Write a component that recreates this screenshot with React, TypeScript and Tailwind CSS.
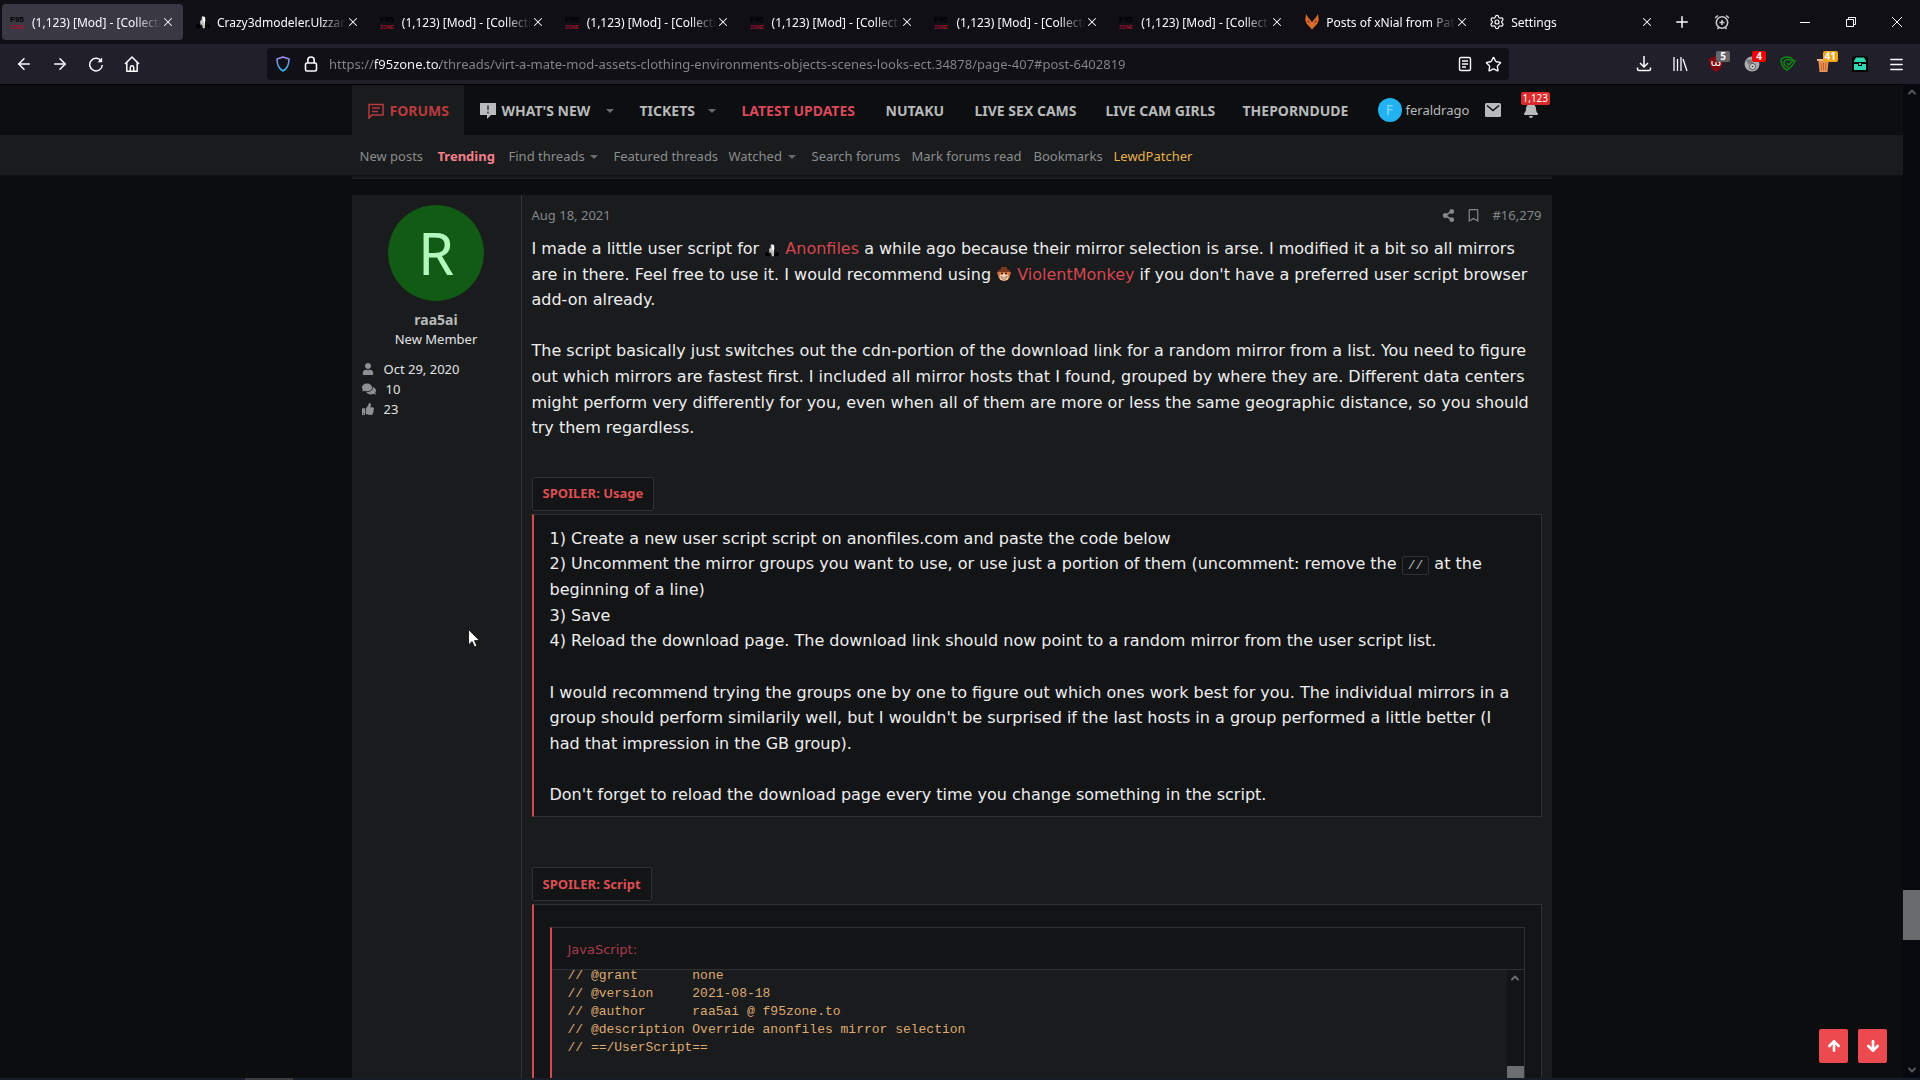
import type { ReactNode } from "react";
import { ArrowDown, ArrowLeft, ArrowRight, ArrowUp, ChevronDown, ChevronUp, Menu, Plus, Settings, Star, X } from "lucide-react";
import { FaBell, FaComments, FaRegBookmark, FaShareAlt, FaThumbsUp, FaUser } from "react-icons/fa";

const COLLECTION = "(1,123) [Mod] - [Collectio";

const tabs = [
  { icon: "f95", title: COLLECTION, active: true },
  { icon: "anon", title: "Crazy3dmodeler.Ulzzang" },
  { icon: "f95", title: COLLECTION },
  { icon: "f95", title: COLLECTION },
  { icon: "f95", title: COLLECTION },
  { icon: "f95", title: COLLECTION },
  { icon: "f95", title: COLLECTION },
  { icon: "fox", title: "Posts of xNial from Patreo" },
  { icon: "gear", title: "Settings" },
];

const navItems = [
  { label: "TICKETS", width: "w-[102px]", caret: true },
  { label: "LATEST UPDATES", width: "w-36", color: "text-[#d9485a]" },
  { label: "NUTAKU", width: "w-[89px]" },
  { label: "LIVE SEX CAMS", width: "w-[131px]" },
  { label: "LIVE CAM GIRLS", width: "w-[137px]" },
  { label: "THEPORNDUDE", width: "w-[135px]" },
];

const subItems = [
  { label: "New posts", width: "w-[78px]" },
  { label: "Trending", width: "w-[71px]", color: "font-bold text-[#f5808a]" },
  { label: "Find threads", width: "w-[105px]", caret: true },
  { label: "Featured threads", width: "w-[115px]" },
  { label: "Watched", width: "w-[83px]", caret: true },
  { label: "Search forums", width: "w-[100px]" },
  { label: "Mark forums read", width: "w-[122px]" },
  { label: "Bookmarks", width: "w-20" },
  { label: "LewdPatcher", width: "w-20", color: "text-[#e8b04e]" },
];

const code = [
  "// @grant       none",
  "// @version     2021-08-18",
  "// @author      raa5ai @ f95zone.to",
  "// @description Override anonfiles mirror selection",
  "// ==/UserScript==",
];

function AnonIcon() {
  return (
    <svg viewBox="0 0 16 16" className="inline-block size-4 shrink-0">
      <path d="M1 14c0-3 1-4 3-4l2 4zM15 14c0-3-1-4-3-4l-2 4z" fill="#000" />
      <path d="M7 2l3 1 .5 4-1 1 .5 6-2 .5-1-4-1.500.5-.5-4 1.500-1z" fill="#c4c4c4" />
      <path d="M8 3h2v10l-1-5-1-1z" fill="#fff" />
    </svg>
  );
}

function MonkeyIcon() {
  return (
    <svg viewBox="0 0 16 16" className="inline-block size-4 align-[-2px]">
      <circle cx="2.500" cy="7" r="1.500" fill="#c26a3c" />
      <circle cx="13.500" cy="7" r="1.500" fill="#c26a3c" />
      <circle cx="8" cy="9" r="6" fill="#d97b45" />
      <path d="M2 5c2-3 10-3 12 0l-1 1H3zM5 1h6v3H5z" fill="#7c3a1c" />
      <ellipse cx="8" cy="11" rx="4.500" ry="3.500" fill="#f7cfa8" />
      <path d="M5 10.500c2 2 4 2 6-.5 0 4-5 4.500-6 .5z" fill="#fff" stroke="#6b2f18" strokeWidth=".6" />
      <circle cx="6" cy="7.500" r="1" fill="#2a130a" />
      <circle cx="10" cy="7.500" r="1" fill="#2a130a" />
    </svg>
  );
}

function Favicon({ name }: { name: string }) {
  if (name === "anon") return <AnonIcon />;
  if (name === "gear") return <Settings className="size-4 shrink-0" strokeWidth={1.8} />;
  if (name === "fox") {
    return (
      <svg viewBox="0 0 16 16" className="size-4 shrink-0">
        <path d="M2 0l2.500 4L8 6l3.500-2L14 0l.8 6-1.300 3.500L8 15.500 2.500 9.500 1.200 6z" fill="#dc6a2c" />
        <path d="M5 4.500h6L8 8z" fill="#100f15" />
        <path d="M3 7l3 1.500M13 7l-3 1.500" stroke="#7d3310" fill="none" />
      </svg>
    );
  }
  return (
    <svg viewBox="0 0 16 16" className="size-4 shrink-0">
      <text x="0" y="8" fontSize="8" fontWeight="700" fontFamily="Liberation Sans, sans-serif" fill="#000">F95</text>
      <text x="0" y="15" fontSize="5" fontWeight="700" fontFamily="Liberation Sans, sans-serif" fill="#a5122f">ZONE</text>
    </svg>
  );
}

function ToolButton({ label, badge, badgeColor, children }: { label: string; badge?: string; badgeColor?: string; children: ReactNode }) {
  return (
    <button aria-label={label} className="relative flex h-10 w-9 items-center justify-center">
      {children}
      {badge && (
        <span className={`absolute top-[7px] right-1 h-[11px] min-w-[14px] rounded-xs px-0.5 text-center text-[10px] leading-[11px] font-bold ${badgeColor}`}>
          {badge}
        </span>
      )}
    </button>
  );
}

function Caret() {
  return <span className="border-x-4 border-t-4 border-x-transparent border-t-[#6b6c6e]" />;
}

function BrowserChrome() {
  return (
    <header className="text-[#fbfbfe]">
      {/* Tab strip */}
      <div className="flex h-11 bg-[#100f15]">
        <div className="flex min-w-0 flex-1">
          {tabs.map((tab, i) => (
            <div
              key={i}
              className={`mx-0.5 my-1 flex min-w-0 flex-1 items-center rounded px-2 ${tab.active ? "bg-[#3a3843]" : ""}`}
            >
              <Favicon name={tab.icon} />
              <a
                href="#tab"
                className="ml-1.5 min-w-0 flex-1 overflow-hidden pt-0.5 text-xs whitespace-nowrap [mask-image:linear-gradient(to_right,black_80%,transparent)]"
              >
                {tab.title}
              </a>
              <button aria-label="Close tab">
                <X className="size-3.5" strokeWidth={1.8} />
              </button>
            </div>
          ))}
        </div>
        <button aria-label="New tab" className="flex w-9 items-center justify-center">
          <Plus className="size-[18px]" strokeWidth={2} />
        </button>
        <button aria-label="Alarm" className="flex w-11 items-center justify-center text-[#c9c9cc]">
          <svg viewBox="0 0 16 16" className="size-4" fill="none" stroke="currentColor" strokeWidth="1.600">
            <circle cx="8" cy="8.500" r="5.700" />
            <path d="M8 6v5M5.500 8.500h5M1 4l3-2.500M15 4l-3-2.500M3.500 15l1.500-2M12.500 15L11 13" />
          </svg>
        </button>
        <div className="ml-[38px] flex">
          <button aria-label="Minimize" className="flex w-[46px] items-center justify-center">
            <span className="h-px w-2.5 bg-white" />
          </button>
          <button aria-label="Restore" className="flex w-[46px] items-center justify-center">
            <svg viewBox="0 0 10 10" className="size-2.5" fill="none" stroke="currentColor">
              <path d="M.5 2.500h7v7h-7zM2.500 2.500v-2h7v7h-2" />
            </svg>
          </button>
          <button aria-label="Close" className="flex w-[46px] items-center justify-center">
            <svg viewBox="0 0 10 10" className="size-2.5" fill="none" stroke="currentColor">
              <path d="M0 0l10 10M10 0L0 10" />
            </svg>
          </button>
        </div>
      </div>

      {/* Toolbar */}
      <div className="flex h-10 items-center gap-[117px] bg-[#211f29] px-1.5">
        <div className="flex">
          <ToolButton label="Back"><ArrowLeft className="size-[18px]" strokeWidth={2} /></ToolButton>
          <ToolButton label="Forward"><ArrowRight className="size-[18px]" strokeWidth={2} /></ToolButton>
          <ToolButton label="Reload">
            <svg viewBox="0 0 16 16" className="size-4" fill="none" stroke="currentColor" strokeWidth="1.500">
              <path d="M13.500 5.500A6.300 6.300 0 1 0 14.300 9" />
              <path d="M14.200 1.500v4.700H9.500z" fill="currentColor" stroke="none" />
            </svg>
          </ToolButton>
          <ToolButton label="Home">
            <svg viewBox="0 0 16 16" className="size-4" fill="none" stroke="currentColor" strokeWidth="1.500" strokeLinejoin="round">
              <path d="M1 8l7-7 7 7M2.800 6.500v8.700h10.400V6.500" />
              <path d="M6.300 15v-3.500a1.700 1.700 0 0 1 3.400 0V15" />
            </svg>
          </ToolButton>
        </div>
        <div className="flex h-8 flex-1 items-center rounded bg-[#121017] pr-0.5 pl-2">
          <svg viewBox="0 0 16 16" className="size-4" fill="none" strokeWidth="1.500" strokeLinejoin="round">
            <defs>
              <linearGradient id="shield" x1="0" y1="0" x2="0" y2="1">
                <stop offset="0" stopColor="#9a8cf0" />
                <stop offset="1" stopColor="#33b7e8" />
              </linearGradient>
            </defs>
            <path d="M8 1l6 2c0 6-1.500 9.500-6 12-4.500-2.500-6-6-6-12z" stroke="url(#shield)" />
          </svg>
          <svg viewBox="0 0 16 16" className="ml-3 size-4" fill="none" stroke="currentColor" strokeWidth="1.600">
            <rect x="2.500" y="7" width="11" height="8" rx="1.500" />
            <path d="M4.800 7V4.200a3.200 3.200 0 0 1 6.400 0V7" />
          </svg>
          <input
            aria-label="Address"
            className="ml-2.5 min-w-0 flex-1 bg-[linear-gradient(to_right,#86858c_46px,#fbfbfe_46px,#fbfbfe_111px,#86858c_111px)] bg-clip-text pt-0.5 text-[13px] text-transparent outline-none"
            defaultValue="https://f95zone.to/threads/virt-a-mate-mod-assets-clothing-environments-objects-scenes-looks-ect.34878/page-407#post-6402819"
          />
          <button aria-label="Reader view" className="flex w-7 justify-center">
            <svg viewBox="0 0 16 16" className="size-4" fill="none" stroke="currentColor" strokeWidth="1.400">
              <rect x="2.500" y="1.500" width="11" height="13" rx="1.500" />
              <path d="M5 5h6M5 8h6M5 11h4" />
            </svg>
          </button>
          <button aria-label="Bookmark this page" className="flex w-7 justify-center">
            <Star className="size-[17px]" strokeWidth={1.9} />
          </button>
        </div>
        <div className="flex">
          <ToolButton label="Downloads">
            <svg viewBox="0 0 16 16" className="size-4" fill="none" stroke="currentColor" strokeWidth="1.500">
              <path d="M8 0v11M4 7l4 4 4-4" />
              <path d="M1.500 11.500v1.500q0 1.500 1.500 1.500h10q1.500 0 1.500-1.500v-1.500" />
            </svg>
          </ToolButton>
          <ToolButton label="Library">
            <svg viewBox="0 0 16 16" className="size-4" fill="none" stroke="currentColor" strokeWidth="1.300">
              <path d="M2 1v14M5.500 3v12M9 1v14M11 3l4 12" />
            </svg>
          </ToolButton>
          <ToolButton label="uBlock" badge="5" badgeColor="bg-[#666669]">
            <svg viewBox="0 0 16 16" className="size-4">
              <path d="M8 0l7 2.500c0 7-1 10-7 13.500C2 12.500 1 9.500 1 2.500z" fill="#800a10" />
              <path d="M4 5v3q0 1.500 2 1.500T8 8V6v2q0 1.500 2 1.500t2-2-2-1.500" fill="none" stroke="#fff" strokeWidth="1.200" />
            </svg>
          </ToolButton>
          <ToolButton label="Privacy" badge="4" badgeColor="bg-[#f00000]">
            <svg viewBox="0 0 16 16" className="size-4">
              <circle cx="8" cy="8" r="7.500" fill="#a9abad" />
              <path d="M2 4l5-1 2 4-5 1z" fill="#77797b" />
              <circle cx="8.500" cy="10.500" r="3" fill="#e4e4e4" stroke="#444" />
              <circle cx="8.500" cy="10.500" r="1" fill="#333" />
            </svg>
          </ToolButton>
          <ToolButton label="Guard">
            <svg viewBox="0 0 16 16" className="size-4" fill="none" stroke="#0d8a12" strokeWidth="1.500">
              <path d="M1 3c3-2 7-2.500 10-1l1.500 2M1 3c0 5 2 9 6 11 4-2 6-5 8-9l-2-1-4 5-2-2" />
              <path d="M11 4.500C8 2.500 3.500 4 4 7s2.500 4 4.500 4.500" />
            </svg>
          </ToolButton>
          <ToolButton label="Cookie cleaner" badge="41" badgeColor="bg-[#f2a516]">
            <svg viewBox="0 0 16 16" className="size-4">
              <path d="M1 3h13v2H1z" fill="#f3b287" />
              <path d="M2.500 5h10l-1 11h-8z" fill="#ee9457" />
              <path d="M5 6.500l.5 8M7.500 6.500v8M10 6.500l-.5 8" stroke="#b8632d" fill="none" />
            </svg>
          </ToolButton>
          <ToolButton label="Containers">
            <svg viewBox="0 0 16 16" className="size-4">
              <path d="M2 0h12l2 2v14H0V2z" fill="#000" />
              <path d="M4 1.500h8L14 5v1H2V5zM2 8h4v2h4V8h4v6H2z" fill="#2fd6b4" />
              <path d="M7 7h2v2H7z" fill="#2fd6b4" />
            </svg>
          </ToolButton>
          <ToolButton label="Menu"><Menu className="size-[17px]" strokeWidth={2} /></ToolButton>
        </div>
      </div>
    </header>
  );
}

function SiteNav() {
  return (
    <div className="shrink-0 border-t border-black">
      <div className="bg-[#0c0e0f]">
        <nav className="mx-auto flex h-[50px] max-w-[1200px] items-stretch text-sm font-bold whitespace-nowrap text-[#b8babb]">
          <a href="#forums" className="flex w-28 items-center gap-1.5 bg-[#191b1c] pt-0.5 pl-4 text-[#b93a3e]">
            <svg viewBox="0 0 16 16" className="size-4" fill="none" stroke="currentColor" strokeWidth="1.500">
              <path d="M1 15V1.500h14V12H4z" />
              <path d="M4 5h8M4 8.500h6" />
            </svg>
            FORUMS
          </a>
          <a href="#new" className="flex w-40 items-center gap-1.5 pt-0.5 pl-4">
            <svg viewBox="0 0 16 16" className="size-4">
              <path d="M0 0h16v12h-5l-4 4v-4H0z" fill="#b8babb" />
              <path d="M7 2.500h2v4.500H7zM7 8.500h2v2H7z" fill="#55585a" />
            </svg>
            WHAT'S NEW
            <span className="ml-auto flex pr-[10px]"><Caret /></span>
          </a>
          {navItems.map((item) => (
            <a key={item.label} href="#nav" className={`flex items-center pt-0.5 pl-4 ${item.width} ${item.color ?? ""}`}>
              {item.label}
              {item.caret && <span className="ml-auto flex pr-[10px]"><Caret /></span>}
            </a>
          ))}
          <div className="flex items-center pl-4 text-[13px] font-normal">
            <a href="#account" className="flex w-[107px] items-center gap-1">
              <span className="flex size-6 items-center justify-center rounded-full bg-[#22b2f2] text-sm text-[#7fd6fa]">F</span>
              feraldrago
            </a>
            <button aria-label="Inbox">
              <svg viewBox="0 0 16 14" className="h-3.5 w-4">
                <rect width="16" height="14" rx="1.500" fill="#b8babb" />
                <path d="M2 2.500l6 5 6-5" fill="none" stroke="#0c0e0f" strokeWidth="1.500" />
              </svg>
            </button>
            <button aria-label="Alerts" className="relative ml-[22px]">
              <FaBell className="size-4" />
              <span className="absolute -top-2.5 -left-0.5 rounded-xs bg-[#d92b2b] px-0.5 text-[10px] leading-[13px] text-white">1,123</span>
            </button>
          </div>
        </nav>
      </div>
      <div className="border-b border-[#101112] bg-[#191b1c]">
        <div className="mx-auto flex h-10 max-w-[1200px] items-center pt-[3px] pl-2 text-[13px] whitespace-nowrap text-[#8b8d8f]">
          {subItems.map((item) => (
            <a key={item.label} href="#sub" className={`flex items-center ${item.width} ${item.color ?? ""}`}>
              {item.label}
              {item.caret && <span className="ml-auto flex pr-4"><Caret /></span>}
            </a>
          ))}
        </div>
      </div>
    </div>
  );
}

function UserCell() {
  return (
    <aside className="w-[170px] shrink-0 border-r border-[#333536] text-[13px] text-[#e2e3e4]">
      <div className="flex flex-col items-center pt-2.5">
        <a href="#raa5ai" className="flex size-24 items-center justify-center rounded-full bg-[#115b14] text-[58px] leading-none text-[#b4f8be]">
          R
        </a>
        <a href="#raa5ai" className="mt-[9px] text-sm leading-5 font-bold text-[#b8babb]">raa5ai</a>
        <span className="leading-[18px]">New Member</span>
      </div>
      <ul className="mt-[11px] pl-2.5 leading-5">
        <li className="flex items-center gap-2.5"><FaUser className="size-3 text-[#8d8f91]" />Oct 29, 2020</li>
        <li className="flex items-center gap-2.5"><FaComments className="size-3.5 text-[#8d8f91]" />10</li>
        <li className="flex items-center gap-2.5"><FaThumbsUp className="size-3 text-[#8d8f91]" />23</li>
      </ul>
    </aside>
  );
}

function SpoilerButton({ title }: { title: string }) {
  return (
    <button className="block h-[34px] rounded-xs border border-[#2f3132] bg-[#131415] px-2.5 text-[13px] font-bold text-[#dc4f52]">
      SPOILER: {title}
    </button>
  );
}

function Post() {
  return (
    <article className="flex flex-1 bg-[#191b1c]">
      <UserCell />
      <div className="flex min-w-0 flex-1 flex-col px-2.5 text-base leading-[1.6] whitespace-nowrap text-[#eeeeef] font-['DejaVu_Sans',sans-serif]">
        <div className="flex h-[41px] shrink-0 items-center text-[13px] text-[#85878a] font-['Noto_Sans',sans-serif]">
          <span>Aug 18, 2021</span>
          <div className="ml-auto flex items-center gap-3">
            <button aria-label="Share"><FaShareAlt className="size-[13px]" /></button>
            <button aria-label="Bookmark"><FaRegBookmark className="size-[13px]" /></button>
            <a href="#post-6402819">#16,279</a>
          </div>
        </div>
        <p>
          I made a little user script for <AnonIcon /> <a href="#anonfiles" className="text-[#d6464f]">Anonfiles</a> a while ago because their mirror selection is arse. I modified it a bit so all mirrors
          <br />
          are in there. Feel free to use it. I would recommend using <MonkeyIcon /> <a href="#violentmonkey" className="text-[#d6464f]">ViolentMonkey</a> if you don't have a preferred user script browser
          <br />
          add-on already.
          <br />
          <br />
          The script basically just switches out the cdn-portion of the download link for a random mirror from a list. You need to figure
          <br />
          out which mirrors are fastest first. I included all mirror hosts that I found, grouped by where they are. Different data centers
          <br />
          might perform very differently for you, even when all of them are more or less the same geographic distance, so you should
          <br />
          try them regardless.
        </p>

        <div className="mt-9 font-['Noto_Sans',sans-serif]"><SpoilerButton title="Usage" /></div>
        <div className="mt-[3px] border border-l-2 border-[#2f3132] border-l-[#d24a4d] bg-[#131415] px-4 pt-[11px] pb-[9px]">
          1) Create a new user script script on anonfiles.com and paste the code below
          <br />
          2) Uncomment the mirror groups you want to use, or use just a portion of them (uncomment: remove the{" "}
          <code className="rounded-xs border border-[#2f3132] px-[5px] py-px text-[13px] text-[#b5b7b8] font-['Liberation_Mono',monospace]">//</code> at the
          <br />
          beginning of a line)
          <br />
          3) Save
          <br />
          4) Reload the download page. The download link should now point to a random mirror from the user script list.
          <br />
          <br />
          I would recommend trying the groups one by one to figure out which ones work best for you. The individual mirrors in a
          <br />
          group should perform similarily well, but I wouldn't be surprised if the last hosts in a group performed a little better (I
          <br />
          had that impression in the GB group).
          <br />
          <br />
          Don't forget to reload the download page every time you change something in the script.
        </div>

        <div className="mt-[50px] font-['Noto_Sans',sans-serif]"><SpoilerButton title="Script" /></div>
        <div className="mt-[3px] flex flex-1 flex-col border border-b-0 border-l-2 border-[#2f3132] border-l-[#d24a4d] bg-[#131415] px-4 pt-[22px]">
          <div className="flex flex-1 flex-col border border-b-0 border-l-2 border-[#2f3132] border-l-[#d24a4d]">
            <div className="flex h-[42px] items-center border-b border-[#2f3132] px-4 pt-0.5 text-[13px] text-[#a83a50]">JavaScript:</div>
            <div className="flex flex-1 overflow-hidden bg-[#191b1c]">
              <pre className="-mt-[3px] flex-1 px-4 text-[13px] leading-[18px] text-[#dfaa72] font-['Liberation_Mono',monospace]">
                {code.join("\n")}
              </pre>
              <div className="flex w-[17px] flex-col items-center justify-between bg-[#131418] text-[#6a6c6e]">
                <ChevronUp className="mt-0.5 size-3" strokeWidth={4} />
                <span className="h-3 w-full bg-[#6c6d6f]" />
              </div>
            </div>
          </div>
        </div>
      </div>
    </article>
  );
}

export default function App() {
  return (
    <div className="relative flex h-screen flex-col overflow-hidden bg-[#0b0d0e] font-['Noto_Sans',sans-serif]">
      <BrowserChrome />
      <div className="flex min-h-0 flex-1">
        <main className="flex min-w-0 flex-1 flex-col overflow-hidden">
          <SiteNav />
          <div className="mx-auto flex w-full max-w-[1200px] flex-1 flex-col">
            <div className="mb-4 h-[3px] shrink-0 border-b border-[#1f2122] bg-[#151718]" />
            <Post />
          </div>
        </main>
        {/* Page scrollbar */}
        <div className="flex w-[17px] flex-col items-center bg-[#08090e] text-[#55575a]">
          <ChevronUp className="mt-0.5 size-3" strokeWidth={4} />
          <span className="mt-auto h-[50px] w-full bg-[#6a6b6d]" />
          <ChevronDown className="mt-[124px] mb-0.5 size-3" strokeWidth={4} />
        </div>
      </div>
      {/* Sliver of the taskbar */}
      <div className="h-0.5 shrink-0 bg-[#171d29] pl-[245px]">
        <div className="h-full w-12 bg-[#3a3d42]" />
      </div>

      <div className="absolute right-[33px] bottom-[17px] flex gap-2.5">
        <button aria-label="Scroll to top" className="flex h-[34px] w-[29px] items-center justify-center rounded-xs bg-[#ec4a4e] text-white">
          <ArrowUp className="size-4" strokeWidth={4} />
        </button>
        <button aria-label="Scroll to bottom" className="flex h-[34px] w-[29px] items-center justify-center rounded-xs bg-[#ec4a4e] text-white">
          <ArrowDown className="size-4" strokeWidth={4} />
        </button>
      </div>

      <svg viewBox="0 0 12 19" className="pointer-events-none absolute top-[629px] left-[468px] h-[19px] w-3">
        <path d="M.5.5v15.500l3.600-3.500 2.400 5.500 2.400-1-2.400-5.400h5z" fill="#fff" stroke="#000" strokeWidth=".8" />
      </svg>
    </div>
  );
}
